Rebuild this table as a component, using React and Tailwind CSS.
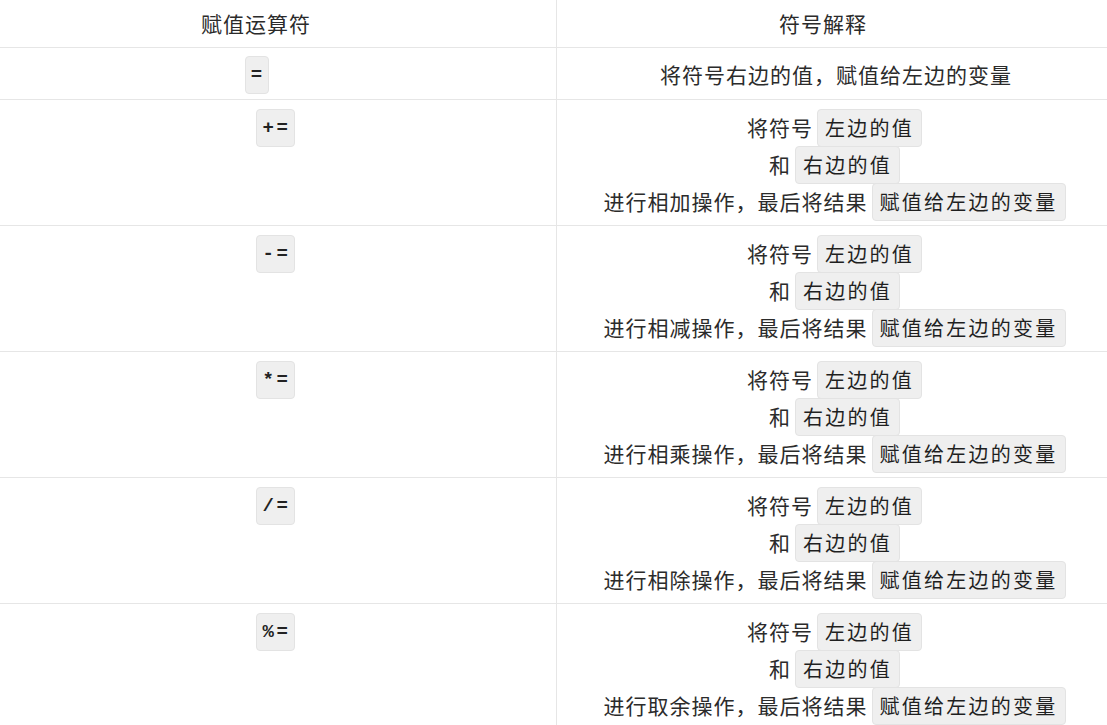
import React from 'react';

const ops = [
  { op: '+=', verb: '相加' },
  { op: '-=', verb: '相减' },
  { op: '*=', verb: '相乘' },
  { op: '/=', verb: '相除' },
  { op: '%=', verb: '取余' },
];

const Code = ({ children }) => (
  <code className="inline-flex h-[38px] items-center rounded-[4px] border border-[#e3e3e3] bg-[#efefef] px-[7px] pt-[6px] text-[20px] leading-none font-normal tracking-[2.25px] text-[#1f1f1f] [font-family:'Liberation_Mono','Noto_Sans_CJK_SC',monospace]">
    {children}
  </code>
);

const OpCode = ({ children }) => (
  <code className="inline-flex h-[38px] items-center rounded-[4px] border border-[#e3e3e3] bg-[#efefef] pl-[6px] pr-[4px] text-[19px] font-bold tracking-[2.5px] text-[#222] [font-family:'Liberation_Mono','Noto_Sans_CJK_SC',monospace]">
    {children}
  </code>
);

export default function App() {
  return (
    <div className="min-h-screen bg-white text-[21px] tracking-[1px] text-[#2b2b2b] [font-family:'Noto_Sans_CJK_SC',sans-serif]">
      <div className="grid grid-cols-[557px_1fr]">
        {/* header */}
        <div className="flex h-[48px] items-center justify-center border-b border-r border-[#e6e6e6] pr-[44px]">
          赋值运算符
        </div>
        <div className="flex h-[48px] items-center justify-center border-b border-[#e6e6e6] pr-[18px]">
          符号解释
        </div>

        {/* = */}
        <div className="flex h-[52px] items-start justify-center border-b border-r border-[#e6e6e6] pt-[8px] pr-[42px]">
          <code className="inline-flex h-[38px] items-center rounded-[4px] border border-[#e3e3e3] bg-[#efefef] px-[5px] text-[19px] font-bold text-[#222] [font-family:'Liberation_Mono',monospace]">
            =
          </code>
        </div>
        <div className="flex h-[52px] items-start justify-center border-b border-[#e6e6e6] pt-[8px] pl-[8px]">
          <div className="flex h-[38px] items-center">将符号右边的值，赋值给左边的变量</div>
        </div>

        {ops.map((row) => (
          <React.Fragment key={row.op}>
            <div className="flex h-[126px] items-start justify-center border-b border-r border-[#e6e6e6] pt-[9px] pr-[5px]">
              <OpCode>{row.op}</OpCode>
            </div>
            <div className="flex h-[126px] flex-col items-center border-b border-[#e6e6e6] pt-[9px] pl-[5px]">
              <div className="flex h-[37px] items-center gap-[4px]">
                <span>将符号</span>
                <Code>左边的值</Code>
              </div>
              <div className="flex h-[37px] items-center gap-[4px]">
                <span>和</span>
                <Code>右边的值</Code>
              </div>
              <div className="flex h-[37px] items-center gap-[4px]">
                <span>进行{row.verb}操作，最后将结果</span>
                <Code>赋值给左边的变量</Code>
              </div>
            </div>
          </React.Fragment>
        ))}
      </div>
    </div>
  );
}
